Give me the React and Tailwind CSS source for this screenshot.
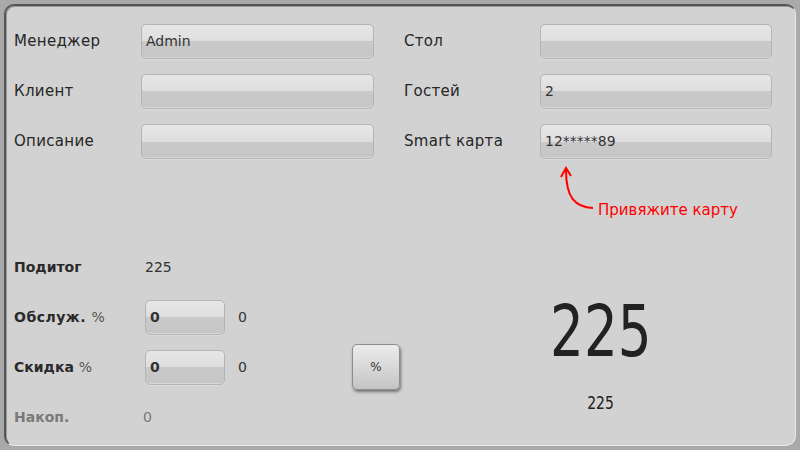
import React from 'react'

const font = { fontFamily: '"DejaVu Sans", "Noto Sans", sans-serif' }
const narrow = { fontFamily: '"Liberation Sans Narrow", "DejaVu Sans Condensed", "Liberation Sans", sans-serif' }

function Field({ value, className = '' }) {
  return (
    <div
      className={`h-[35px] rounded-[5px] border border-[#b4b4b4] bg-[linear-gradient(to_bottom,#e6e6e6_0%,#dedede_50%,#c9c9c9_50%,#c6c6c6_100%)] shadow-[inset_0_-1px_0_#d8d8d8,0_1px_0_#dcdcdc] flex items-center px-[4px] text-[14px] text-[#333] ${className}`}
    >
      {value}
    </div>
  )
}

function Row({ label, value, labelW }) {
  return (
    <div className="flex items-center h-[50px]">
      <div className={`${labelW} text-[15px] text-[#262626] tracking-[0.3px]`}>{label}</div>
      <Field value={value} className="flex-1" />
    </div>
  )
}

export default function App() {
  return (
    <div style={font} className="w-[800px] h-[450px] bg-[#a9a9a9] p-[4px] overflow-hidden">
      <div className="w-[792px] h-[442px] rounded-[10px] bg-[#d2d2d2] border-t-[2px] border-l-[2px] border-[#555] border-r border-b border-r-[#eaeaea] border-b-[#eaeaea] shadow-[inset_1px_1px_0_#9a9a9a] flex flex-col">
        {/* top form */}
        <div className="flex pt-[10px] pl-[8px]">
          <div className="w-[360px] flex flex-col">
            <Row label="Менеджер" value="Admin" labelW="w-[127px]" />
            <Row label="Клиент" value="" labelW="w-[127px]" />
            <Row label="Описание" value="" labelW="w-[127px]" />
          </div>
          <div className="w-[368px] ml-[30px] flex flex-col">
            <Row label="Стол" value="" labelW="w-[136px]" />
            <Row label="Гостей" value="2" labelW="w-[136px]" />
            <Row label="Smart карта" value="12*****89" labelW="w-[136px]" />
            <div className="flex items-start h-[46px] ml-[143px]">
              <svg width="46" height="46" viewBox="0 0 46 46" className="shrink-0">
                <path d="M46 42 C 28 41, 19 32, 19 4" fill="none" stroke="#ff0000" strokeWidth="2" />
                <path d="M14 11 L19 2 L24 10" fill="none" stroke="#ff0000" strokeWidth="2" />
              </svg>
              <span className="text-[15px] leading-[18px] text-[#ff0000] mt-[35px] ml-[5px]">Привяжите карту</span>
            </div>
          </div>
        </div>

        {/* bottom totals */}
        <div className="flex mt-[30px] pl-[8px]">
          <div className="w-[392px] flex flex-col">
            <div className="flex items-center h-[50px]">
              <div className="w-[131px] text-[14px] font-bold text-[#2a2a2a]">Подитог</div>
              <div className="text-[14px] text-[#333]">225</div>
            </div>
            <div className="flex items-center h-[50px]">
              <div className="w-[131px] text-[14px] font-bold text-[#2a2a2a] tracking-[0.5px]">
                Обслуж. <span className="font-normal text-[#555]">%</span>
              </div>
              <Field value="0" className="w-[80px] font-bold" />
              <div className="ml-[13px] text-[14px] text-[#333]">0</div>
            </div>
            <div className="flex items-center h-[50px]">
              <div className="w-[131px] text-[14px] font-bold text-[#2a2a2a]">
                Скидка <span className="font-normal text-[#555]">%</span>
              </div>
              <Field value="0" className="w-[80px] font-bold" />
              <div className="ml-[13px] text-[14px] text-[#333]">0</div>
              <button className="ml-[105px] w-[48px] h-[46px] rounded-[5px] border border-[#8c8c8c] bg-[linear-gradient(to_bottom,#ececec,#c4c4c4)] shadow-[1px_2px_3px_rgba(0,0,0,0.45)] text-[12px] text-[#333]">
                %
              </button>
            </div>
            <div className="flex items-center h-[50px]">
              <div className="w-[129px] text-[14px] font-bold text-[#7a7a7a]">Накоп.</div>
              <div className="text-[14px] text-[#777]">0</div>
            </div>
          </div>
          <div style={narrow} className="flex-1 flex flex-col items-center pt-[53px]">
            <div className="text-[72px] leading-none text-[#222] scale-x-[0.82]">225</div>
            <div className="mt-[27px] text-[18px] leading-none text-[#222] scale-x-[0.86]">225</div>
          </div>
        </div>
      </div>
    </div>
  )
}
